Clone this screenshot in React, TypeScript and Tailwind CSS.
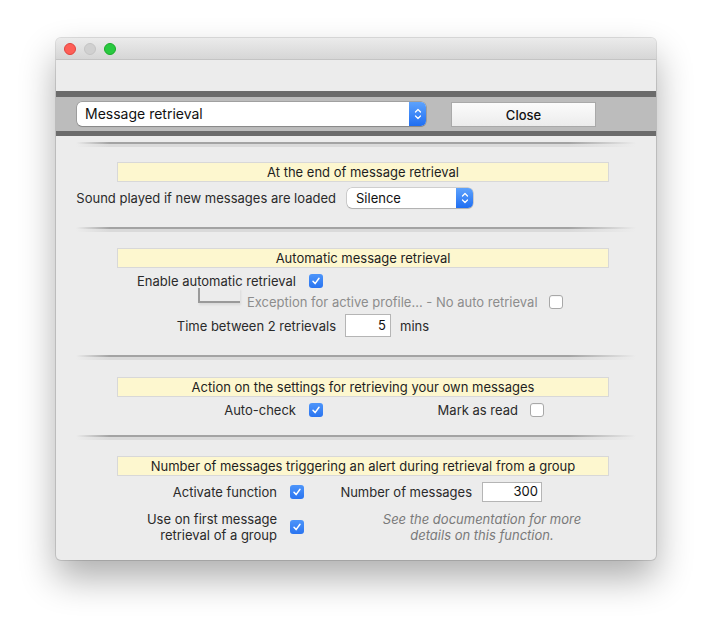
const FONT = { fontFamily: '"Inter", "Liberation Sans", sans-serif' };

function Check({ on }: { on: boolean }) {
  if (!on) {
    return (
      <span className="block h-[14px] w-[14px] shrink-0 rounded-[3px] border border-[#a8a8a8] bg-white shadow-[inset_0_1px_0_rgba(0,0,0,0.04)]" />
    );
  }
  return (
    <span className="flex h-[14px] w-[14px] shrink-0 items-center justify-center rounded-[3px] bg-gradient-to-b from-[#4d95fa] to-[#2a74f0]">
      <svg width="10" height="10" viewBox="0 0 10 10">
        <path d="M2 5.3 L4.1 7.6 L8 2.3" fill="none" stroke="white" strokeWidth="1.5" strokeLinecap="round" strokeLinejoin="round" />
      </svg>
    </span>
  );
}

function Stepper() {
  return (
    <span className="flex h-full w-[17px] items-center justify-center rounded-r-[5px] bg-gradient-to-b from-[#5da2fc] to-[#1f6ef2]">
      <svg width="8" height="14" viewBox="0 0 8 14">
        <path d="M1.5 5 L4 2.5 L6.5 5 M1.5 9 L4 11.5 L6.5 9" fill="none" stroke="white" strokeWidth="1.3" strokeLinecap="round" strokeLinejoin="round" />
      </svg>
    </span>
  );
}

function Separator({ mt }: { mt: string }) {
  return (
    <div className={`ml-[20px] w-[560px] ${mt}`}>
      <div className="h-[2px] bg-[linear-gradient(to_right,rgba(150,150,150,0),#a3a3a3_6%,#a3a3a3_88%,rgba(150,150,150,0))]" />
      <div className="h-[3px] bg-[linear-gradient(to_right,rgba(200,200,200,0),#dadada_6%,#dadada_88%,rgba(200,200,200,0))]" />
    </div>
  );
}

function Banner({ text, mt }: { text: string; mt: string }) {
  return (
    <div className={`ml-[61px] flex h-[20px] w-[492px] items-center justify-center border border-[#d8d8d8] bg-[#fdf7cf] text-[13px] leading-[16px] text-[#1e1e1e] ${mt}`}>
      {text}
    </div>
  );
}

const LABEL = "text-right text-[13px] leading-[16px] text-[#2a2a2a]";

export default function App() {
  return (
    <div className="min-h-[634px] bg-white pl-[56px] pt-[38px]" style={FONT}>
      <div className="h-[522px] w-[600px] overflow-hidden rounded-[5px] bg-[#ececec] shadow-[0_0_0_1px_rgba(0,0,0,0.12),0_18px_36px_rgba(0,0,0,0.32)]">
        {/* title bar */}
        <div className="flex h-[22px] items-center gap-[8px] border-b border-[#c4c4c4] bg-gradient-to-b from-[#ebebeb] to-[#d6d6d6] pl-[8px]">
          <span className="h-[12px] w-[12px] rounded-full border border-[#e0443e] bg-[#fe5f57]" />
          <span className="h-[12px] w-[12px] rounded-full border border-[#c4c4c4] bg-[#d0d0d0]" />
          <span className="h-[12px] w-[12px] rounded-full border border-[#1aab29] bg-[#29c940]" />
        </div>

        {/* toolbar band */}
        <div className="mt-[31px] flex h-[45px] items-center gap-[25px] border-y-[6px] border-b-[5px] border-[#6b6b6b] bg-[#bcbcbc] pl-[21px]">
          <div className="flex h-[24px] w-[349px] items-stretch rounded-[5px] bg-white shadow-[0_0_0_0.5px_rgba(0,0,0,0.3),0_1px_1px_rgba(0,0,0,0.15)]">
            <span className="flex-1 pl-[8px] text-[14px] leading-[24px] text-[#111]">Message retrieval</span>
            <Stepper />
          </div>
          <div className="mt-[1px] flex h-[25px] w-[145px] items-center justify-center border border-[#a9a9a9] bg-gradient-to-b from-[#fbfbfb] to-[#ececec] pt-[2px] text-[13px] font-medium text-[#111]">
            Close
          </div>
        </div>

        <Separator mt="mt-[6px]" />

        {/* section 1 */}
        <Banner text="At the end of message retrieval" mt="mt-[15px]" />
        <div className="mt-[6px] flex h-[20px] items-center">
          <span className={`w-[280px] ${LABEL}`}>Sound played if new messages are loaded</span>
          <div className="ml-[11px] flex h-[20px] w-[126px] items-stretch rounded-[5px] bg-white shadow-[0_0_0_0.5px_rgba(0,0,0,0.25),0_1px_1px_rgba(0,0,0,0.15)]">
            <span className="flex-1 pl-[9px] text-[13px] leading-[20px] text-[#111]">Silence</span>
            <Stepper />
          </div>
        </div>

        <Separator mt="mt-[19px]" />

        {/* section 2 */}
        <Banner text="Automatic message retrieval" mt="mt-[16px]" />
        <div className="mt-[6px] flex h-[14px] items-center">
          <span className={`w-[240px] ${LABEL}`}>Enable automatic retrieval</span>
          <span className="ml-[13px]"><Check on /></span>
        </div>
        <div className="mt-[7px] flex h-[14px] items-center">
          <div className="ml-[142px] mt-[-7px] h-[15px] w-[42px] self-start border-b-2 border-l-2 border-[#9a9a9a] shadow-[1px_2px_2px_rgba(0,0,0,0.08)]" />
          <span className="ml-[7px] w-[302px] text-[13px] leading-[16px] text-[#8d8d8d]">Exception for active profile... - No auto retrieval</span>
          <Check on={false} />
        </div>
        <div className="mt-[5px] flex h-[23px] items-center">
          <span className={`w-[280px] ${LABEL}`}>Time between 2 retrievals</span>
          <span className="ml-[9px] flex h-[23px] w-[46px] items-center justify-end border border-[#b5b5b5] bg-white pr-[4px] text-[13px] text-[#111]">5</span>
          <span className="ml-[9px] text-[13px] leading-[16px] text-[#2a2a2a]">mins</span>
        </div>

        <Separator mt="mt-[18px]" />

        {/* section 3 */}
        <Banner text="Action on the settings for retrieving your own messages" mt="mt-[17px]" />
        <div className="mt-[6px] flex h-[14px] items-center">
          <span className={`w-[240px] ${LABEL}`}>Auto-check</span>
          <span className="ml-[13px]"><Check on /></span>
          <span className={`w-[195px] ${LABEL}`}>Mark as read</span>
          <span className="ml-[12px]"><Check on={false} /></span>
        </div>

        <Separator mt="mt-[18px]" />

        {/* section 4 */}
        <Banner text="Number of messages triggering an alert during retrieval from a group" mt="mt-[16px]" />
        <div className="mt-[6px] flex h-[20px] items-center">
          <span className={`w-[221px] ${LABEL}`}>Activate function</span>
          <span className="ml-[13px]"><Check on /></span>
          <span className={`w-[168px] ${LABEL}`}>Number of messages</span>
          <span className="ml-[10px] flex h-[20px] w-[60px] items-center justify-end border border-[#b5b5b5] bg-white pr-[3px] text-[13px] text-[#111]">300</span>
        </div>
        <div className="mt-[9px] flex items-center">
          <span className={`w-[221px] ${LABEL}`}>
            Use on first message
            <br />
            retrieval of a group
          </span>
          <span className="ml-[13px]"><Check on /></span>
          <span className="ml-[66px] w-[224px] text-center text-[13px] italic leading-[16px] text-[#7a7a7a]">
            See the documentation for more
            <br />
            details on this function.
          </span>
        </div>
      </div>
    </div>
  );
}
